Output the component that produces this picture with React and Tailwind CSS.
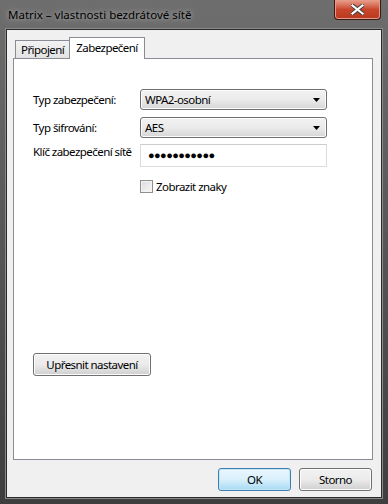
import React from "react";

const font = { fontFamily: '"Noto Sans", "Liberation Sans", sans-serif' };

function Combo({ value }) {
  return (
    <div className="flex h-[21px] w-[187px] items-center justify-between rounded-[3px] border border-[#707070] bg-gradient-to-b from-[#f2f2f2] via-[#ebebeb] to-[#d6d6d6] pl-[4px] pr-[6px] shadow-[inset_0_0_0_1px_#fcfcfc]">
      <span className="leading-none text-black">{value}</span>
      <svg width="7" height="4" viewBox="0 0 7 4"><path d="M0 0h7L3.5 4z" fill="#000" /></svg>
    </div>
  );
}

function Btn({ children, w, focus }) {
  return (
    <div
      className={
        "flex h-[23px] items-center justify-center rounded-[3px] border text-black " +
        (focus
          ? "border-[#3c7fb1] bg-gradient-to-b from-[#eaf6fd] via-[#d9f0fc] to-[#a7d9f5] shadow-[inset_0_0_0_1px_#c4e5f6]"
          : "border-[#707070] bg-gradient-to-b from-[#f2f2f2] via-[#ebebeb] to-[#cfcfcf] shadow-[inset_0_0_0_1px_#fcfcfc]")
      }
      style={{ width: w }}
    >
      {children}
    </div>
  );
}

export default function App() {
  return (
    <div style={font} className="relative h-[504px] w-[388px] bg-gradient-to-b from-[#6e6e6e] via-[#555555] to-[#3e3e3e] pl-[6px] pr-[6px] pt-[29px] pb-[6px]">
      {/* title */}
      <div className="absolute left-[8px] top-[6px] text-[11.5px] text-black [text-shadow:0_0_8px_#a0a0a0,0_0_4px_#a8a8a8]">
        Matrix – vlastnosti bezdrátové sítě
      </div>
      {/* close button */}
      <div className="absolute right-[7px] top-0 flex h-[20px] w-[47px] items-center justify-center rounded-b-[4px] border border-t-0 border-[#3b1a14] bg-gradient-to-b from-[#e8a08e] via-[#c9462c] to-[#b83a1f] shadow-[inset_0_0_0_1px_#e89a88]">
        <svg width="13" height="11" viewBox="0 0 13 11">
          <path d="M1.5 1.5l10 8M11.5 1.5l-10 8" stroke="#3a3a3a" strokeWidth="4" strokeLinecap="square" />
          <path d="M1.5 1.5l10 8M11.5 1.5l-10 8" stroke="#fff" strokeWidth="2.2" strokeLinecap="square" />
        </svg>
      </div>
      {/* client */}
      <div className="flex h-full flex-col border border-[#2a2a2a] bg-[#f0f0f0] shadow-[0_0_0_1px_#8a8a8a] pl-[6px] pr-[8px] pt-[7px] text-[11.5px] tracking-[-0.55px]">
        {/* tabs */}
        <div className="flex items-end pl-[2px]">
          <div className="-mr-px flex h-[18px] items-center border border-b-0 border-[#898c95] bg-gradient-to-b from-[#f2f2f2] to-[#e3e3e3] px-[5px] text-black">
            Připojení
          </div>
          <div className="relative z-10 -mb-px flex h-[22px] items-start border border-b-0 border-[#898c95] bg-white px-[6px] pt-[1px] text-black">
            Zabezpečení
          </div>
        </div>
        {/* panel */}
        <div className="flex h-[402px] flex-col border border-[#898c95] bg-white pl-[19px] pt-[30px]">
          <div className="flex items-center">
            <div className="w-[107px] whitespace-nowrap text-black">Typ zabezpečení:</div>
            <Combo value="WPA2-osobní" />
          </div>
          <div className="mt-[7px] flex items-center">
            <div className="w-[107px] whitespace-nowrap text-black">Typ šifrování:</div>
            <Combo value="AES" />
          </div>
          <div className="mt-[6px] flex items-start">
            <div className="w-[107px] whitespace-nowrap leading-[16px] text-black">Klíč zabezpečení sítě</div>
            <div className="flex h-[23px] w-[187px] items-center border border-[#dcdcdc] border-t-[#cdcdcd] pl-[7px]">
              <span className="text-[11px] font-bold tracking-[-0.6px] text-black">●●●●●●●●●●●</span>
            </div>
          </div>
          <div className="ml-[107px] mt-[11px] flex h-[17px] items-center">
            <div className="h-[13px] w-[13px] border border-[#8f8f8f] bg-gradient-to-br from-[#dcdcdc] to-[#f7f7f7] shadow-[inset_0_0_0_1px_#f4f4f4]" />
            <span className="ml-[3px] text-black">Zobrazit znaky</span>
          </div>
          <div className="mt-[158px]">
            <Btn w="118px">Upřesnit nastavení</Btn>
          </div>
        </div>
        {/* bottom buttons */}
        <div className="mt-[8px] flex justify-end gap-[8px] pr-px">
          <Btn w="73px" focus>OK</Btn>
          <Btn w="73px">Storno</Btn>
        </div>
      </div>
    </div>
  );
}
